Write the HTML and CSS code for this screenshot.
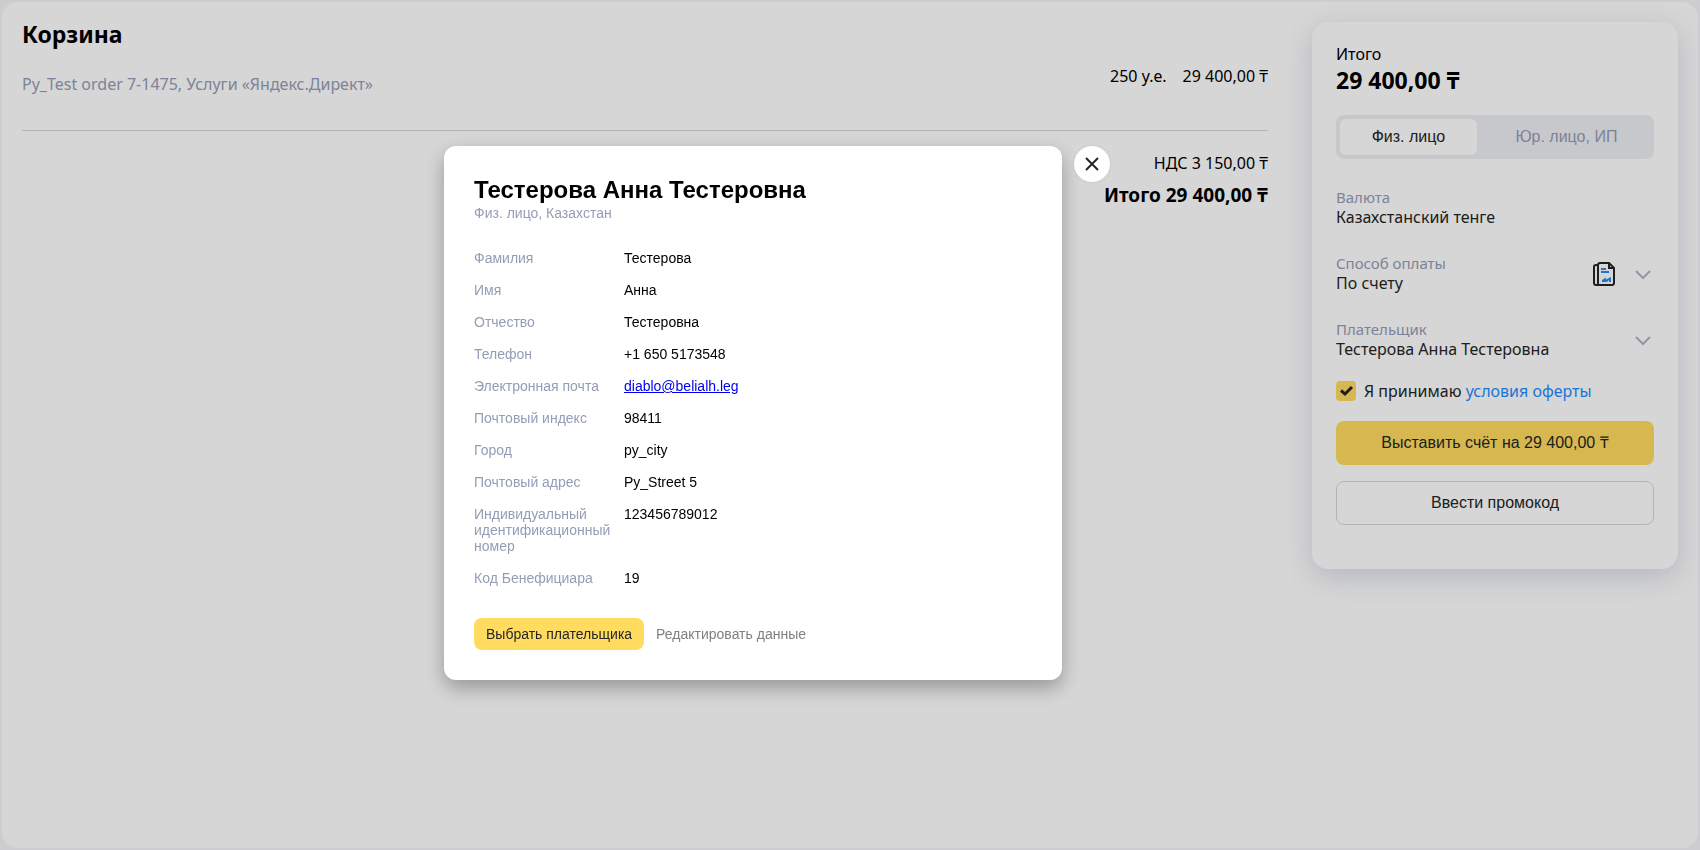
FILE: index.html
```html
<!DOCTYPE html>
<html lang="ru">
<head>
<meta charset="utf-8">
<title>Корзина</title>
<link rel="stylesheet" href="styles.css">
</head>
<body>
<div class="page">
  <main class="cart">
    <h1 class="cart-title">Корзина</h1>
    <div class="order">
      <span class="order-name">Py_Test order 7-1475, Услуги «Яндекс.Директ»</span>
      <span class="order-sum"><span>250 у.е.</span><span>29 400,00 ₸</span></span>
    </div>
    <div class="vat">НДС 3 150,00 ₸</div>
    <div class="cart-total">Итого 29 400,00 ₸</div>
  </main>
  <aside class="checkout">
    <div class="checkout-label">Итого</div>
    <div class="checkout-sum">29 400,00 ₸</div>
    <div class="tabs">
      <button class="tab tab-active" type="button">Физ. лицо</button>
      <button class="tab" type="button">Юр. лицо, ИП</button>
    </div>
    <div class="field">
      <div class="field-text"><div class="field-label">Валюта</div><div>Казахстанский тенге</div></div>
    </div>
    <button class="field" type="button">
      <span class="field-text"><span class="field-label">Способ оплаты</span><span>По счету</span></span>
      <svg class="doc-icon" viewBox="0 0 22 24" width="22" height="24" fill="none">
        <path d="M5 3H3Q1 3 1 5V21Q1 23 3 23H19Q21 23 21 21V6L16 1H7Q5 1 5 3V23" stroke="#262626" stroke-width="2"/>
        <path d="M16 1V6H21" stroke="#262626" stroke-width="2"/>
        <path d="M8 7H13M8 10H16" stroke="#1f8cff" stroke-width="2"/>
        <path d="M9 20V18L13 15.500V17.500L18 15V20H16V18L14 20Z" fill="#1f8cff"/>
      </svg>
      <svg class="chevron" viewBox="0 0 16 10" width="16" height="10" fill="none"><path d="M1 1L8 8L15 1" stroke="#aeb4c6" stroke-width="2"/></svg>
    </button>
    <button class="field field-payer" type="button">
      <span class="field-text"><span class="field-label">Плательщик</span><span>Тестерова Анна Тестеровна</span></span>
      <svg class="chevron" viewBox="0 0 16 10" width="16" height="10" fill="none"><path d="M1 1L8 8L15 1" stroke="#aeb4c6" stroke-width="2"/></svg>
    </button>
    <div class="accept">
      <span class="check">
        <input class="check-input" id="accept" type="checkbox" checked>
        <svg class="check-mark" viewBox="0 0 20 20" width="20" height="20" fill="none"><path d="M5 9.500L9 13L16 6" stroke="#262626" stroke-width="3"/></svg>
      </span>
      <label for="accept">Я принимаю <a class="offer" href="#">условия оферты</a></label>
    </div>
    <button class="action action-main" type="button">Выставить счёт на 29 400,00 ₸</button>
    <button class="action action-promo" type="button">Ввести промокод</button>
  </aside>
</div>
<div class="overlay">
  <section class="modal" role="dialog" aria-labelledby="payer">
    <h2 class="modal-title" id="payer">Тестерова Анна Тестеровна</h2>
    <p class="modal-type">Физ. лицо, Казахстан</p>
    <dl class="details">
      <dt>Фамилия</dt><dd>Тестерова</dd>
      <dt>Имя</dt><dd>Анна</dd>
      <dt>Отчество</dt><dd>Тестеровна</dd>
      <dt>Телефон</dt><dd>+1 650 5173548</dd>
      <dt>Электронная почта</dt><dd><a class="mail" href="mailto:diablo@belialh.leg">diablo@belialh.leg</a></dd>
      <dt>Почтовый индекс</dt><dd>98411</dd>
      <dt>Город</dt><dd>py_city</dd>
      <dt>Почтовый адрес</dt><dd>Py_Street 5</dd>
      <dt>Индивидуальный идентификационный номер</dt><dd>123456789012</dd>
      <dt>Код Бенефициара</dt><dd>19</dd>
    </dl>
    <div class="modal-actions">
      <button class="choose" type="button">Выбрать плательщика</button>
      <button class="edit" type="button">Редактировать данные</button>
    </div>
  </section>
  <button class="close" type="button" aria-label="Закрыть">
    <svg viewBox="0 0 16 16" width="16" height="16" fill="none"><path d="M2 2L14 14M14 2L2 14" stroke="#262626" stroke-width="2"/></svg>
  </button>
</div>
</body>
</html>
```
FILE: styles.css
```css
* { box-sizing: border-box; }
body {
  margin: 0;
  padding: 2px;
  min-height: 100vh;
  display: flex;
  background: #f5f5f7;
  color: #000;
  font: 16px/20px "Noto Sans", sans-serif;
}
button { border: 0; padding: 0; background: none; color: inherit; font: inherit; cursor: pointer; }
.page {
  flex: 1;
  display: flex;
  align-items: flex-start;
  gap: 44px;
  padding: 20px;
  background: #fff;
  border-radius: 16px;
}
.cart { flex: 1; display: flex; flex-direction: column; }
.cart-title { margin: 0; font-size: 23px; line-height: 24px; font-weight: 700; }
.order {
  display: flex;
  justify-content: space-between;
  align-items: flex-start;
  padding: 20px 0 36px;
  border-bottom: 1px solid #d5d7e2;
}
.order-name { padding-top: 8px; color: #959cb5; }
.order-sum { display: flex; gap: 16px; }
.vat { margin-top: 22px; text-align: right; }
.cart-total { margin-top: 12px; text-align: right; font-size: 19px; font-weight: 700; }
.checkout {
  width: 366px;
  padding: 22px 24px 44px;
  display: flex;
  flex-direction: column;
  background: #fff;
  border-radius: 16px;
  box-shadow: 0 8px 28px rgba(60, 75, 120, .2);
}
.checkout-sum { margin-top: 4px; font-size: 23px; line-height: 24px; font-weight: 700; }
.tabs { display: flex; gap: 6px; margin: 23px 0 28px; padding: 4px; background: #eeeff4; border-radius: 8px; }
.tab { flex: 9; height: 36px; border-radius: 6px; color: #959cb5; font: 16px/20px "Liberation Sans", Arial, sans-serif; }
.tab + .tab { flex: 11; }
.tab-active { background: #fff; color: #262626; }
.field { display: flex; align-items: center; gap: 20px; margin-bottom: 26px; text-align: left; color: #262626; }
.field-payer { margin-bottom: 22px; }
.field-text { flex: 1; display: flex; flex-direction: column; }
.field-label { font-size: 15px; color: #959cb5; }
.doc-icon { margin-top: 2px; }
.chevron { margin: 3px 3px 0 0; }
.accept { display: flex; align-items: center; gap: 8px; margin-bottom: 20px; color: #262626; }
.check { position: relative; width: 20px; height: 20px; }
.check-input { appearance: none; display: block; width: 20px; height: 20px; margin: 0; border-radius: 4px; background: #ffdb60; }
.check-mark { position: absolute; inset: 0; pointer-events: none; }
.offer { color: #1f8cff; text-decoration: none; }
.action { height: 44px; border-radius: 8px; color: #262626; font: 16px/20px "Liberation Sans", Arial, sans-serif; }
.action-main { background: #ffdb60; margin-bottom: 16px; }
.action-promo { border: 1px solid #d5d7e2; }
.overlay {
  position: fixed;
  inset: 0;
  display: flex;
  justify-content: center;
  align-items: flex-start;
  gap: 12px;
  padding: 146px 146px 0 0;
  background: rgba(0, 0, 0, .16);
  font: 14px/16px "Liberation Sans", Arial, sans-serif;
}
.modal {
  width: 618px;
  padding: 30px;
  background: #fff;
  border-radius: 12px;
  box-shadow: 0 8px 20px rgba(0, 0, 0, .3);
}
.modal-title { margin: 0 0 1px; font-size: 24px; line-height: 28px; }
.modal-type { margin: 0 0 29px; color: #959cb5; }
.details { display: grid; grid-template-columns: 138px 1fr; gap: 16px 12px; margin: 0 0 32px; }
.details dt { color: #959cb5; }
.details dd { margin: 0; }
.mail { color: #00e; }
.modal-actions { display: flex; gap: 12px; }
.choose { height: 32px; padding: 0 12px; border-radius: 8px; background: #ffdb60; color: #262626; }
.edit { color: #808080; }
.close {
  display: flex;
  align-items: center;
  justify-content: center;
  width: 36px;
  height: 36px;
  border-radius: 50%;
  background: #fff;
  box-shadow: 0 0 2px rgba(0, 0, 0, .16);
}
```
